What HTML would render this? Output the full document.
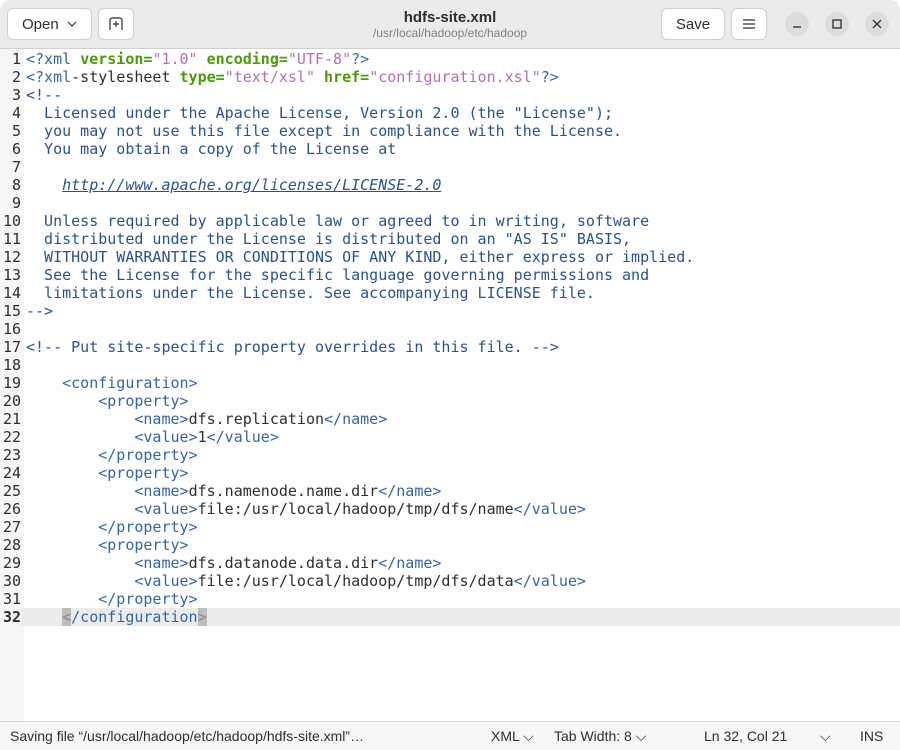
<!DOCTYPE html>
<html><head><meta charset="utf-8"><style>
body{margin:0;width:900px;height:749px;overflow:hidden;background:#fff;font-family:"Liberation Sans",sans-serif;position:relative}
.hdr{position:absolute;left:0;top:0;width:900px;height:48px;background:#ebebeb;border-bottom:1px solid #d0d0d0;border-radius:10px 10px 0 0}
.btn{position:absolute;top:8px;height:32px;background:#fff;border:1px solid #cfcfcf;border-radius:6px;box-sizing:border-box;font-size:15px;color:#2e2e2e;display:flex;align-items:center;justify-content:center}
.circ{position:absolute;top:12px;width:24px;height:24px;border-radius:50%;background:#dcdcdc;display:flex;align-items:center;justify-content:center}
.title{position:absolute;left:0;width:900px;text-align:center;top:9px;font-weight:bold;font-size:15px;color:#2e2e2e}
.sub{position:absolute;left:0;width:900px;text-align:center;top:26px;font-size:12px;color:#808080}
.gut{position:absolute;left:0;top:49px;width:24px;height:672px;background:#f6f6f6}
.code{position:absolute;left:0;top:50px;font-family:"DejaVu Sans Mono",monospace;font-size:15px;line-height:18px;color:#2e2e2e}
.ln{display:inline-block;width:21px;text-align:right;margin-right:5px;color:#2e2e2e}
.row{height:18px;width:900px;white-space:pre;overflow:hidden}
.cur{background:#ebebeb}
.t{color:#3465a4}.a{color:#4e9a06;font-weight:bold}.s{color:#b56eb0}.c{color:#27538a}.b{background:#bcbcbc;color:#8a8a8a}
.stat{position:absolute;left:0;top:721px;width:900px;height:28px;background:#f6f6f6;border-top:1px solid #d6d6d6;font-size:14px;color:#2e2e2e}
.stat span{position:absolute;top:6px}
</style></head><body>
<div class="hdr">
<div class="btn" style="left:7px;width:85px">Open&nbsp;&nbsp;<svg width="10" height="6" viewBox="0 0 10 6"><path d="M1 1l4 4 4-4" fill="none" stroke="#2e2e2e" stroke-width="1.2"/></svg></div>
<div class="btn" style="left:98px;width:36px"><svg width="14" height="14" viewBox="0 0 14 14"><path d="M1 13V3a2 2 0 0 1 2-2h8a2 2 0 0 1 2 2v10M7 4v6M4 7h6" fill="none" stroke="#2e2e2e" stroke-width="1.2"/></svg></div>
<div class="title">hdfs-site.xml</div>
<div class="sub">/usr/local/hadoop/etc/hadoop</div>
<div class="btn" style="left:661px;width:64px">Save</div>
<div class="btn" style="left:731px;width:36px"><svg width="12" height="10" viewBox="0 0 12 10"><path d="M0 1h12M0 5h12M0 9h12" stroke="#2e2e2e" stroke-width="1.2"/></svg></div>
<div class="circ" style="left:785px"><svg width="10" height="10"><path d="M1 8h8" stroke="#2e2e2e" stroke-width="1.3"/></svg></div>
<div class="circ" style="left:825px"><svg width="10" height="10"><rect x="1" y="1" width="8" height="8" fill="none" stroke="#2e2e2e" stroke-width="1.3"/></svg></div>
<div class="circ" style="left:865px"><svg width="10" height="10"><path d="M1 1l8 8M9 1l-8 8" stroke="#2e2e2e" stroke-width="1.3"/></svg></div>
</div>
<div class="gut"></div>
<div class="code">
<div class="row"><span class="ln">1</span><span class="t">&lt;?xml</span> <span class="a">version=</span><span class="s">"1.0"</span> <span class="a">encoding=</span><span class="s">"UTF-8"</span><span class="t">?&gt;</span></div>
<div class="row"><span class="ln">2</span><span class="t">&lt;?xml</span>-stylesheet <span class="a">type=</span><span class="s">"text/xsl"</span> <span class="a">href=</span><span class="s">"configuration.xsl"</span><span class="t">?&gt;</span></div>
<div class="row"><span class="ln">3</span><span class="c">&lt;!--</span></div>
<div class="row"><span class="ln">4</span><span class="c">  Licensed under the Apache License, Version 2.0 (the "License");</span></div>
<div class="row"><span class="ln">5</span><span class="c">  you may not use this file except in compliance with the License.</span></div>
<div class="row"><span class="ln">6</span><span class="c">  You may obtain a copy of the License at</span></div>
<div class="row"><span class="ln">7</span></div>
<div class="row"><span class="ln">8</span><span class="c">    <i style="text-decoration:underline">http://www.apache.org/licenses/LICENSE-2.0</i></span></div>
<div class="row"><span class="ln">9</span></div>
<div class="row"><span class="ln">10</span><span class="c">  Unless required by applicable law or agreed to in writing, software</span></div>
<div class="row"><span class="ln">11</span><span class="c">  distributed under the License is distributed on an "AS IS" BASIS,</span></div>
<div class="row"><span class="ln">12</span><span class="c">  WITHOUT WARRANTIES OR CONDITIONS OF ANY KIND, either express or implied.</span></div>
<div class="row"><span class="ln">13</span><span class="c">  See the License for the specific language governing permissions and</span></div>
<div class="row"><span class="ln">14</span><span class="c">  limitations under the License. See accompanying LICENSE file.</span></div>
<div class="row"><span class="ln">15</span><span class="c">--&gt;</span></div>
<div class="row"><span class="ln">16</span></div>
<div class="row"><span class="ln">17</span><span class="c">&lt;!-- Put site-specific property overrides in this file. --&gt;</span></div>
<div class="row"><span class="ln">18</span></div>
<div class="row"><span class="ln">19</span>    <span class="t">&lt;configuration&gt;</span></div>
<div class="row"><span class="ln">20</span>        <span class="t">&lt;property&gt;</span></div>
<div class="row"><span class="ln">21</span>            <span class="t">&lt;name&gt;</span>dfs.replication<span class="t">&lt;/name&gt;</span></div>
<div class="row"><span class="ln">22</span>            <span class="t">&lt;value&gt;</span>1<span class="t">&lt;/value&gt;</span></div>
<div class="row"><span class="ln">23</span>        <span class="t">&lt;/property&gt;</span></div>
<div class="row"><span class="ln">24</span>        <span class="t">&lt;property&gt;</span></div>
<div class="row"><span class="ln">25</span>            <span class="t">&lt;name&gt;</span>dfs.namenode.name.dir<span class="t">&lt;/name&gt;</span></div>
<div class="row"><span class="ln">26</span>            <span class="t">&lt;value&gt;</span>file:/usr/local/hadoop/tmp/dfs/name<span class="t">&lt;/value&gt;</span></div>
<div class="row"><span class="ln">27</span>        <span class="t">&lt;/property&gt;</span></div>
<div class="row"><span class="ln">28</span>        <span class="t">&lt;property&gt;</span></div>
<div class="row"><span class="ln">29</span>            <span class="t">&lt;name&gt;</span>dfs.datanode.data.dir<span class="t">&lt;/name&gt;</span></div>
<div class="row"><span class="ln">30</span>            <span class="t">&lt;value&gt;</span>file:/usr/local/hadoop/tmp/dfs/data<span class="t">&lt;/value&gt;</span></div>
<div class="row"><span class="ln">31</span>        <span class="t">&lt;/property&gt;</span></div>
<div class="row cur"><span class="ln" style="font-weight:bold;background:#f6f6f6">32</span>    <span class="b">&lt;</span><span class="t">/configuration</span><span class="b">&gt;</span></div>
</div>
<div class="stat">
<span style="left:10px">Saving file “/usr/local/hadoop/etc/hadoop/hdfs-site.xml”…</span>
<span style="left:491px">XML ⌵</span>
<span style="left:554px">Tab Width: 8 ⌵</span>
<span style="left:704px">Ln 32, Col 21</span>
<span style="left:820px">⌵</span>
<span style="left:860px">INS</span>
</div>
</body></html>
